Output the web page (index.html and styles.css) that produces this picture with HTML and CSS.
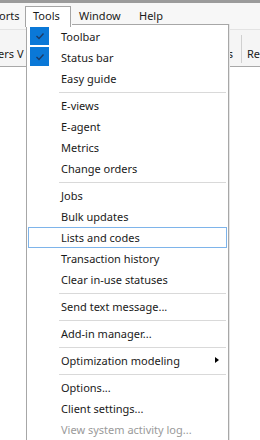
FILE: index.html
```html
<!DOCTYPE html>
<html>
<head>
<meta charset="utf-8">
<link rel="stylesheet" href="styles.css">
</head>
<body>
<div class="app">
  <div class="topband"></div>
  <div class="menubar">
    <span class="mb-item mb-first">orts</span>
    <span class="mb-item mb-open">Tools</span>
    <span class="mb-item mb-window">Window</span>
    <span class="mb-item mb-help">Help</span>
  </div>
  <div class="toolbar">
    <span class="tb-left">ers V</span>
    <span class="tb-spacer"></span>
    <span class="tb-s">s</span>
    <span class="tb-sep"></span>
    <span class="tb-re">Re</span>
  </div>
  <div class="content"></div>

  <div class="dropdown">
    <div class="item"><span class="check"><svg width="10" height="8" viewBox="0 0 10 8"><path d="M1.5 4 L4 6.5 L8.5 1.5" fill="none" stroke="#1b3a66" stroke-width="1.4"/></svg></span><span class="label">Toolbar</span></div>
    <div class="item"><span class="check"><svg width="10" height="8" viewBox="0 0 10 8"><path d="M1.5 4 L4 6.5 L8.5 1.5" fill="none" stroke="#1b3a66" stroke-width="1.4"/></svg></span><span class="label">Status bar</span></div>
    <div class="item"><span class="label">Easy guide</span></div>
    <div class="sep"></div>
    <div class="item"><span class="label">E-views</span></div>
    <div class="item"><span class="label">E-agent</span></div>
    <div class="item"><span class="label">Metrics</span></div>
    <div class="item"><span class="label">Change orders</span></div>
    <div class="sep"></div>
    <div class="item"><span class="label">Jobs</span></div>
    <div class="item"><span class="label">Bulk updates</span></div>
    <div class="item hover"><span class="label">Lists and codes</span></div>
    <div class="item"><span class="label">Transaction history</span></div>
    <div class="item"><span class="label">Clear in-use statuses</span></div>
    <div class="sep"></div>
    <div class="item"><span class="label">Send text message...</span></div>
    <div class="sep"></div>
    <div class="item"><span class="label">Add-in manager...</span></div>
    <div class="sep"></div>
    <div class="item"><span class="label">Optimization modeling</span><span class="arrow"></span></div>
    <div class="sep"></div>
    <div class="item"><span class="label">Options...</span></div>
    <div class="item"><span class="label">Client settings...</span></div>
    <div class="item disabled"><span class="label">View system activity log...</span></div>
  </div>
</div>
</body>
</html>
```
FILE: styles.css
```css
html, body {
  margin: 0;
  padding: 0;
  background: #ffffff;
}
.app {
  position: relative;
  width: 260px;
  height: 440px;
  overflow: hidden;
  font-family: "Noto Sans", "Open Sans", sans-serif;
  font-size: 11px;
  color: #1a1a1a;
}
.topband {
  height: 3px;
  background: #9b9b9b;
}
.menubar {
  height: 26px;
  background: #f7f7f7;
  border-bottom: 1px solid #e3e3e3;
  display: flex;
  align-items: flex-start;
  white-space: nowrap;
}
.mb-item {
  height: 18px;
  line-height: 18px;
  margin-top: 4px;
  box-sizing: border-box;
}
.mb-first {
  width: 26px;
  margin-left: -1px;
  padding-left: 0;
}
.mb-open {
  border: 1px solid #a5a5a5;
  border-bottom: none;
  background: #ffffff;
  margin-top: 3px;
  height: 21px;
  line-height: 18px;
  padding: 0 0 0 7px;
  width: 46px;
  position: relative;
  z-index: 2;
}
.mb-window {
  width: 60px;
  padding-left: 8px;
}
.mb-help {
  padding-left: 8px;
}
.toolbar {
  height: 34px;
  background: #f5f5f5;
  border-bottom: 1px solid #a8a8a8;
  display: flex;
  align-items: center;
  white-space: nowrap;
  padding-top: 2px;
  box-sizing: content-box;
}
.tb-left {
  margin-left: -2px;
  padding-top: 8px;
}
.tb-spacer {
  flex: 1;
}
.tb-s {
  padding-top: 8px;
  margin-right: 8px;
}
.tb-sep {
  width: 1px;
  height: 28px;
  background: #d0d0d0;
  margin-right: 5px;
}
.tb-re {
  padding-top: 8px;
  width: 13px;
  overflow: hidden;
}
.content {
  height: 375px;
  background: #ffffff;
}
.dropdown {
  position: absolute;
  left: 26px;
  top: 24px;
  width: 203px;
  height: 430px;
  box-sizing: border-box;
  background: #ffffff;
  border: 1px solid #a7a7a7;
  border-top: none;
  box-shadow: 1px 0 0 #e6e6e6;
  display: flex;
  flex-direction: column;
  padding: 2px 1px 0 1px;
  z-index: 1;
}
.dropdown::before {
  content: "";
  position: absolute;
  top: 0;
  left: 45px;
  right: -1px;
  height: 1px;
  background: #a7a7a7;
}
.item {
  height: 21px;
  flex: none;
  display: flex;
  align-items: center;
  position: relative;
  white-space: nowrap;
  box-sizing: border-box;
  border: 1px solid transparent;
}
.item.hover {
  border-color: #7eb4ea;
  background: #ffffff;
}
.check {
  position: absolute;
  left: 1px;
  top: -1px;
  width: 19px;
  height: 19px;
  background: #0a78d7;
  display: flex;
  align-items: center;
  justify-content: center;
}
.label {
  margin-left: 32px;
}
.disabled .label {
  color: #9a9a9a;
}
.arrow {
  position: absolute;
  left: 186px;
  top: 6px;
  width: 0;
  height: 0;
  border-top: 3.5px solid transparent;
  border-bottom: 3.5px solid transparent;
  border-left: 4px solid #000000;
}
.sep {
  height: 6px;
  flex: none;
  display: flex;
  align-items: center;
  padding-left: 31px;
  padding-right: 1px;
}
.sep::after {
  content: "";
  flex: 1;
  height: 1px;
  background: #d9d9d9;
}
```
